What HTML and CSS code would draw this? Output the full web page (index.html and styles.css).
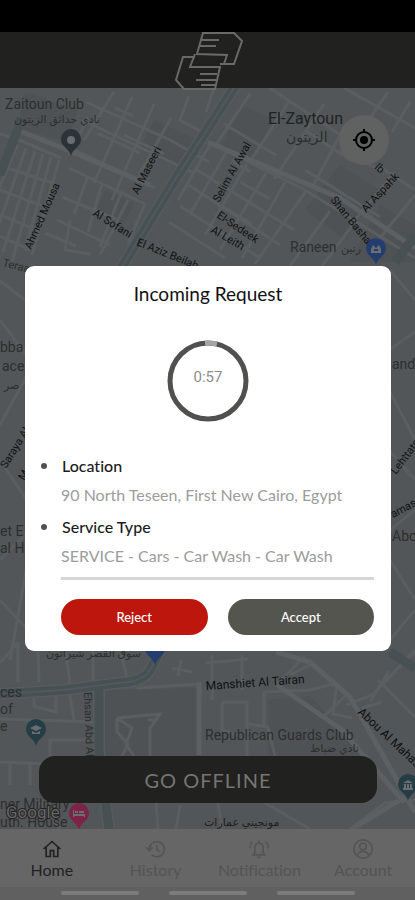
FILE: index.html
```
<!DOCTYPE html>
<html lang="en">
  <head>
    <meta charset="UTF-8" />
    <meta name="viewport" content="width=device-width, initial-scale=1.0" />
    <title>Incoming Request</title>
    <link rel="stylesheet" href="styles.css" />
  </head>
  <body>
    <div class="app">
      <div class="status_bar"></div>
      <header class="header">
        <svg class="logo" viewBox="0 0 70 60" aria-label="Logo">
          <path d="M30 1H61L69 9L61 32H51L54 23L24 22Z" />
          <path d="M29 8H46M27 14H43" />
          <path d="M22 25H10L3 48L11 57H42L47 35H17L22 22" />
          <path d="M51 32H47M27 42H44M23 48H43M28 53H42" />
        </svg>
      </header>

      <main class="map">
        <svg class="map_canvas" viewBox="0 88 415 741" preserveAspectRatio="xMidYMid slice">
          <defs>
            <path id="pin" d="M0 16C-2 8-10 7-10-1A10 10 0 0 1 10-1C10 7 2 8 0 16Z" />
          </defs>
          <rect class="land" y="88" width="415" height="741" />
          <path class="block" d="M25 92L78 110L66 142L18 128ZM155 120L198 140L180 168L139 148ZM240 105L275 120L250 160L222 145ZM340 165L380 190L345 240L305 210ZM105 190L135 204L122 225L96 212ZM380 205L415 225V262H350ZM104 690L200 688V790H104ZM268 700L310 696L365 756H268Z" />

          <!-- small streets -->
          <path class="street" d="M0 134L17 139L61 158M17 145L-12 215M26 148L-5 235M35 151L3 252M43 154L12 262M51 157L25 250M59 160L32 255M8 168L52 183M0 190L45 207M0 215L37 230M0 236L30 250" />
          <path class="street" d="M88 118L69 155M114 92L84 140M132 97L94 183M154 104L112 200M171 118L139 175M189 96L180 120L200 131M86 102L170 140L209 162M82 120L192 172M97 133L140 153M75 150L155 188M69 168L145 204M88 176L74 214M102 184L88 232M121 193L100 247M62 197L116 219M57 220L110 245M45 233L76 246M70 220L65 250L90 254M115 108L133 116M124 135L164 154M128 200L100 255M145 204L128 243" />
          <path class="street" d="M214 88L206 112M270 88L360 148M250 94L215 146M290 100L251 160M324 104L274 179M346 124L313 186M224 124L276 155M211 143L305 190L415 258M197 170L294 230M187 184L280 245M180 206L260 258M169 222L225 258M211 143L178 200M227 151L190 214M247 164L205 235M266 173L220 250M285 182L242 258M306 191L255 264M330 211L290 266M352 226L322 266M305 170L380 217M340 150L380 170M373 104L415 128M344 88L415 128M388 92L370 118M410 102L392 132M377 165L415 190M395 172L350 226M415 195L370 250M305 130L350 160M232 160L250 172M240 182L270 199M222 206L252 224" />
          <path class="street" d="M0 281L25 300M0 320L30 360M0 425L30 370M0 460L30 505M0 560L30 530M0 600L28 630M10 660L28 560M390 270L415 300M389 350L415 332M389 390L415 440M389 450L415 480M390 530L415 510M390 560L415 600M390 640L415 610" />
          <path class="street" d="M0 663L18 642M18 642V682M38 650L39 682M66 652L70 684M93 651V681M121 654L128 681M0 719L98 722M34 693V706L56 712V696M69 690L74 720M50 756V740H98M0 762L48 764M10 763V785M30 764V785M117 718L160 714L150 728V756M117 718V732L128 744L122 756M117 718L132 728L126 744L134 756M148 720H158M137 688L202 684M181 660L178 676M172 668L192 672M200 688L199 755" />
          <path class="street" d="M206 663L248 659M212 655V700M242 655V690M222 702H247V756M222 702V730L238 735M264 692V726M264 692L310 690L333 684M248 724L268 727L275 756M305 656L277 684M346 695L322 718M337 683L333 714L352 718M346 705L372 695L415 652M372 695L415 650M378 680L415 717M389 671L370 702M362 708L382 702M310 665L290 675M180 805L176 829M107 800V829M156 802L158 829M218 803L222 829M350 829L385 803L415 800M265 803L310 829M40 803L60 829" />

          <!-- wider roads -->
          <path class="road" d="M17 130L70 151L150 185M208 142L340 198L415 248M276 652L310 662L350 697L415 812M276 684L342 730L404 802M352 829L398 801M199 682V755" />

          <!-- highways -->
          <path class="edge" d="M239 80L178 175L120 270M0 694L64 690L118 683C151 682 151 668 160 650M99 687V750L109 829" />
          <path class="highway" d="M239 80L178 175L120 270M0 694L64 690L118 683C151 682 151 668 160 650M99 687V750L109 829M22 118L0 175M415 236L395 262M390 652L415 668" />
          <path class="center" d="M239 80L178 175L120 270M0 694L64 690L118 683C151 682 151 668 160 650" />

          <!-- place names -->
          <g class="place">
            <text x="5" y="109">Zaitoun Club</text>
            <text class="arabic" x="14" y="123">نادي حدائق الزيتون</text>
            <text class="district" x="268" y="124">El-Zaytoun</text>
            <text class="district_ar" x="286" y="142">الزيتون</text>
            <text x="290" y="252">Raneen</text>
            <text class="arabic" x="341" y="252">رنين</text>
            <text x="0" y="352">bba</text>
            <text x="2" y="371">ace</text>
            <text class="arabic" x="4" y="389">صر</text>
            <text x="0" y="536">et E</text>
            <text x="0" y="553">al H</text>
            <text x="392" y="369">and</text>
            <text x="392" y="541">Abo</text>
            <text class="arabic" x="46" y="657">سوق القصر شيراتون</text>
            <text x="0" y="697">ces</text>
            <text x="0" y="714">of</text>
            <text x="0" y="731">e</text>
            <text x="205" y="740">Republican Guards Club</text>
            <text class="arabic" x="310" y="752">نادي ضباط</text>
            <text class="dark arabic" x="204" y="826">مونجيني عمارات</text>
            <text x="0" y="809">ner Military</text>
            <text x="0" y="827">uth. House</text>
          </g>

          <!-- street names -->
          <g class="street_name">
            <text transform="translate(31 250) rotate(-66)">Ahmed Mousa</text>
            <text transform="translate(138 195) rotate(-63)">Al Maseeri</text>
            <text transform="translate(92 215) rotate(32)">Al Sofani</text>
            <text transform="translate(136 245) rotate(22)">El Aziz Beilah</text>
            <text transform="translate(219 203) rotate(-61)">Selim Al Awal</text>
            <text transform="translate(216 217) rotate(34)">El-Sedeek</text>
            <text transform="translate(210 232) rotate(30)">Al Leith</text>
            <text transform="translate(330 200) rotate(51)">Shan Basha</text>
            <text transform="translate(366 213) rotate(-47)">Al Aspahk</text>
            <text transform="translate(374 168) rotate(42)">lb</text>
            <text class="faded" transform="translate(2 266) rotate(14)">Teraa</text>
            <text transform="translate(6 469) rotate(-58)">Saraya Al</text>
            <text transform="translate(24 481) rotate(-58)">M</text>
            <text transform="translate(396 475) rotate(-53)">Lehttate</text>
            <text transform="translate(393 518) rotate(-28)">amasc</text>
            <text class="wide" transform="translate(206 690) rotate(-4)">Manshiet Al Tairan</text>
            <text class="wide" transform="translate(357 713) rotate(43)">Abou Al Mahasen</text>
            <text class="faded" transform="translate(84 692) rotate(88)">Ehsan Abd Al</text>
          </g>

          <g transform="translate(71 140)">
            <use class="pin_slate" href="#pin" />
            <circle class="pin_dot" r="4" />
          </g>
          <g transform="translate(376 249)">
            <use class="pin_blue" href="#pin" />
            <path class="pin_glyph" d="M-5 4V0L-3-4L0-1L3-4L5 0V4ZM-2 2H2V0H-2Z" />
          </g>
          <use class="pin_blue" href="#pin" transform="translate(155 649)" />
          <g transform="translate(36 730)">
            <use class="pin_teal" href="#pin" />
            <path class="pin_glyph" d="M-6-2L0-5L6-2L0 1ZM-4 1L0 3L4 1V4H-4Z" />
          </g>
          <g transform="translate(408 785)">
            <use class="pin_teal" href="#pin" />
            <path class="pin_glyph" d="M-5-2L0-5L5-2ZM-4-1H-2V3H-4ZM-1-1H1V3H-1ZM2-1H4V3H2ZM-5 3H5V5H-5Z" />
          </g>
          <g transform="translate(79 814)">
            <use class="pin_pink" href="#pin" />
            <path class="pin_glyph" d="M-6-4H-5V0H6V3H5V2H-5V3H-6ZM-4-3H-1V-1H-4ZM0-3H5V-1H0Z" />
          </g>
          <text class="google" x="6" y="818">Google</text>
        </svg>

        <button class="locate" aria-label="My location">
          <svg viewBox="0 0 24 24">
            <circle class="ring" cx="12" cy="12" r="8" />
            <circle cx="12" cy="12" r="4" />
            <path class="ring" d="M12 1V4M12 20V23M1 12H4M20 12H23" />
          </svg>
        </button>
        <button class="offline">GO OFFLINE</button>
      </main>

      <nav class="nav">
        <a class="nav_item active" href="#home">
          <svg viewBox="0 0 24 24"><path d="M2 12L12 3L22 12M5 10V21H10V14H14V21H19V10" /></svg>
          <span>Home</span>
        </a>
        <a class="nav_item" href="#history">
          <svg viewBox="0 0 24 24"><path d="M4 13A9 9 0 1 1 7 19M0 10L4 14L8 10M13 7V13L17 15" /></svg>
          <span>History</span>
        </a>
        <a class="nav_item" href="#notification">
          <svg viewBox="0 0 24 24"><path d="M5 19H19L17 16V11C17 7 15 5 12 5S7 7 7 11V16ZM12 2V5M10 22H14M1 11C1 7 2 5 4 3M23 11C23 7 22 5 20 3" /></svg>
          <span>Notification</span>
        </a>
        <a class="nav_item" href="#account">
          <svg viewBox="0 0 24 24"><circle cx="12" cy="12" r="11" /><circle cx="12" cy="9" r="4" /><path d="M5 20C6 16 9 15 12 15S18 16 19 20" /></svg>
          <span>Account</span>
        </a>
      </nav>
      <div class="system_bar">
        <span></span>
        <span></span>
        <span></span>
      </div>
    </div>

    <div class="overlay">
      <section class="dialog" role="dialog" aria-labelledby="dialog_title">
        <h1 id="dialog_title">Incoming Request</h1>
        <div class="timer">
          <svg viewBox="0 0 82 82">
            <circle class="timer_ring" cx="41" cy="41" r="38" />
            <path class="timer_gone" d="M38 3A38 38 0 0 1 50 4" />
          </svg>
          <span class="timer_text">0:57</span>
        </div>
        <dl class="details">
          <dt>Location</dt>
          <dd>90 North Teseen, First New Cairo, Egypt</dd>
          <dt>Service Type</dt>
          <dd>SERVICE - Cars - Car Wash - Car Wash</dd>
        </dl>
        <div class="actions">
          <button class="reject">Reject</button>
          <button class="accept">Accept</button>
        </div>
      </section>
    </div>
  </body>
</html>
```
FILE: styles.css
```
* {
  box-sizing: border-box;
}

body {
  margin: 0;
  background-color: #000;
  font-family: Lato, "Open Sans", sans-serif;
  font-variant-ligatures: none;
}

button {
  border: none;
  padding: 0;
  font-family: inherit;
  cursor: pointer;
}

.app {
  display: flex;
  flex-direction: column;
  min-height: 100vh;
}

.status_bar {
  height: 32px;
}

.header {
  display: flex;
  justify-content: center;
  height: 56px;
  background-color: #21211f;
}

.logo {
  width: 70px;
  height: 60px;
  position: relative;
  z-index: 1;
  fill: none;
  stroke: #696969;
  stroke-width: 2;
}

/* map */
.map {
  position: relative;
  flex: 1;
  display: flex;
  flex-direction: column;
  justify-content: space-between;
  padding: 27px 38px 26px 39px;
  overflow: hidden;
}

.map_canvas {
  position: absolute;
  top: 0;
  left: 0;
  width: 100%;
  height: 100%;
}

.land {
  fill: #525658;
}

.block {
  fill: #4f5254;
}

.street,
.road,
.edge,
.highway,
.center {
  fill: none;
  stroke: #5a5e60;
  stroke-width: 3;
}

.road {
  stroke: #5c6062;
  stroke-width: 5;
}

.edge {
  stroke: #565c5e;
  stroke-width: 12;
}

.highway {
  stroke: #475053;
  stroke-width: 9;
}

.center {
  stroke: #50595c;
  stroke-width: 2;
}

.place {
  fill: #2c2e30;
  font-family: Roboto, "DejaVu Sans", sans-serif;
  font-size: 14px;
}

.place .arabic {
  font-size: 11px;
}

.place .district {
  font-size: 16px;
  fill: #202224;
}

.place .district_ar {
  font-size: 14px;
}

.place .dark {
  fill: #1c1e20;
}

.street_name {
  fill: #101112;
  font-family: Roboto, sans-serif;
  font-size: 11px;
}

.street_name .wide {
  font-size: 12px;
}

.street_name .faded {
  fill: #2c2e30;
}

.pin_slate {
  fill: #2b3338;
}

.pin_blue {
  fill: #233d70;
}

.pin_teal {
  fill: #253d45;
}

.pin_pink {
  fill: #7c2446;
}

.pin_dot,
.pin_glyph {
  fill: #6a6e70;
}

.google {
  fill: #666;
  stroke: #222;
  stroke-width: 2;
  paint-order: stroke;
  font-family: Roboto, sans-serif;
  font-size: 17px;
}

.locate {
  position: relative;
  align-self: flex-end;
  width: 50px;
  height: 50px;
  margin-right: -12px;
  border-radius: 50%;
  background-color: #606161;
}

.locate svg {
  display: block;
  width: 24px;
  height: 24px;
  margin: auto;
}

.locate .ring {
  fill: none;
  stroke: #000;
  stroke-width: 2;
}

.offline {
  position: relative;
  height: 47px;
  border-radius: 16px;
  background-color: #21211f;
  color: #757575;
  font-size: 20px;
  letter-spacing: 1px;
}

/* bottom bar */
.nav {
  display: flex;
  height: 58px;
  background-color: #666;
}

.nav_item {
  flex: 1;
  display: flex;
  flex-direction: column;
  align-items: center;
  padding-top: 10px;
  color: #545454;
  font-size: 16px;
  line-height: 22px;
  text-decoration: none;
}

.nav_item.active {
  color: #222;
}

.nav_item svg {
  width: 20px;
  height: 20px;
  fill: none;
  stroke: currentColor;
  stroke-width: 2;
}

.system_bar {
  display: flex;
  justify-content: center;
  gap: 30px;
  height: 13px;
  padding-top: 4px;
  background-color: #606060;
}

.system_bar span {
  width: 78px;
  height: 4px;
  border-radius: 2px;
  background-color: #7c7c7c;
}

/* request dialog */
.overlay {
  position: fixed;
  inset: 0;
  z-index: 2;
  display: flex;
  align-items: center;
  padding: 17px 24px 0 25px;
}

.dialog {
  flex: 1;
  padding: 15px 17px 16px;
  border-radius: 9px;
  background-color: #fff;
}

.dialog h1 {
  margin: 0;
  color: #111;
  font-size: 19px;
  font-weight: 400;
  line-height: 26px;
  text-align: center;
}

.timer {
  display: grid;
  place-items: center;
  width: 82px;
  height: 82px;
  margin: 33px auto 32px;
}

.timer svg,
.timer_text {
  grid-area: 1 / 1;
}

.timer svg {
  width: 82px;
  height: 82px;
  fill: none;
}

.timer_ring {
  stroke: #50504e;
  stroke-width: 5;
}

.timer_gone {
  stroke: #a5a5a5;
  stroke-width: 5;
}

.timer_text {
  padding-bottom: 8px;
  color: #8c8c8c;
  font-family: Roboto, sans-serif;
  font-size: 15px;
}

.details {
  margin: 0 0 19px 19px;
  padding-bottom: 9px;
  border-bottom: 3px solid #d6d6d6;
}

.details dt {
  display: flex;
  align-items: center;
  color: #1c1c1c;
  font-size: 16px;
  font-weight: 500;
  line-height: 24px;
}

.details dt::before {
  content: "";
  width: 6px;
  height: 6px;
  margin-left: -20px;
  margin-right: 15px;
  border-radius: 50%;
  background-color: #50504e;
}

.details dd {
  margin: 4px 0 8px;
  color: #9c9c9c;
  font-size: 16px;
  line-height: 25px;
}

.details dd:last-child {
  margin-bottom: 0;
}

.actions {
  display: flex;
  gap: 20px;
  margin-left: 19px;
}

.actions button {
  flex: 1;
  height: 36px;
  border-radius: 18px;
  background-color: #555550;
  color: #fff;
  font-size: 13px;
  font-weight: 500;
}

.actions .reject {
  background-color: #bd160c;
}
```
